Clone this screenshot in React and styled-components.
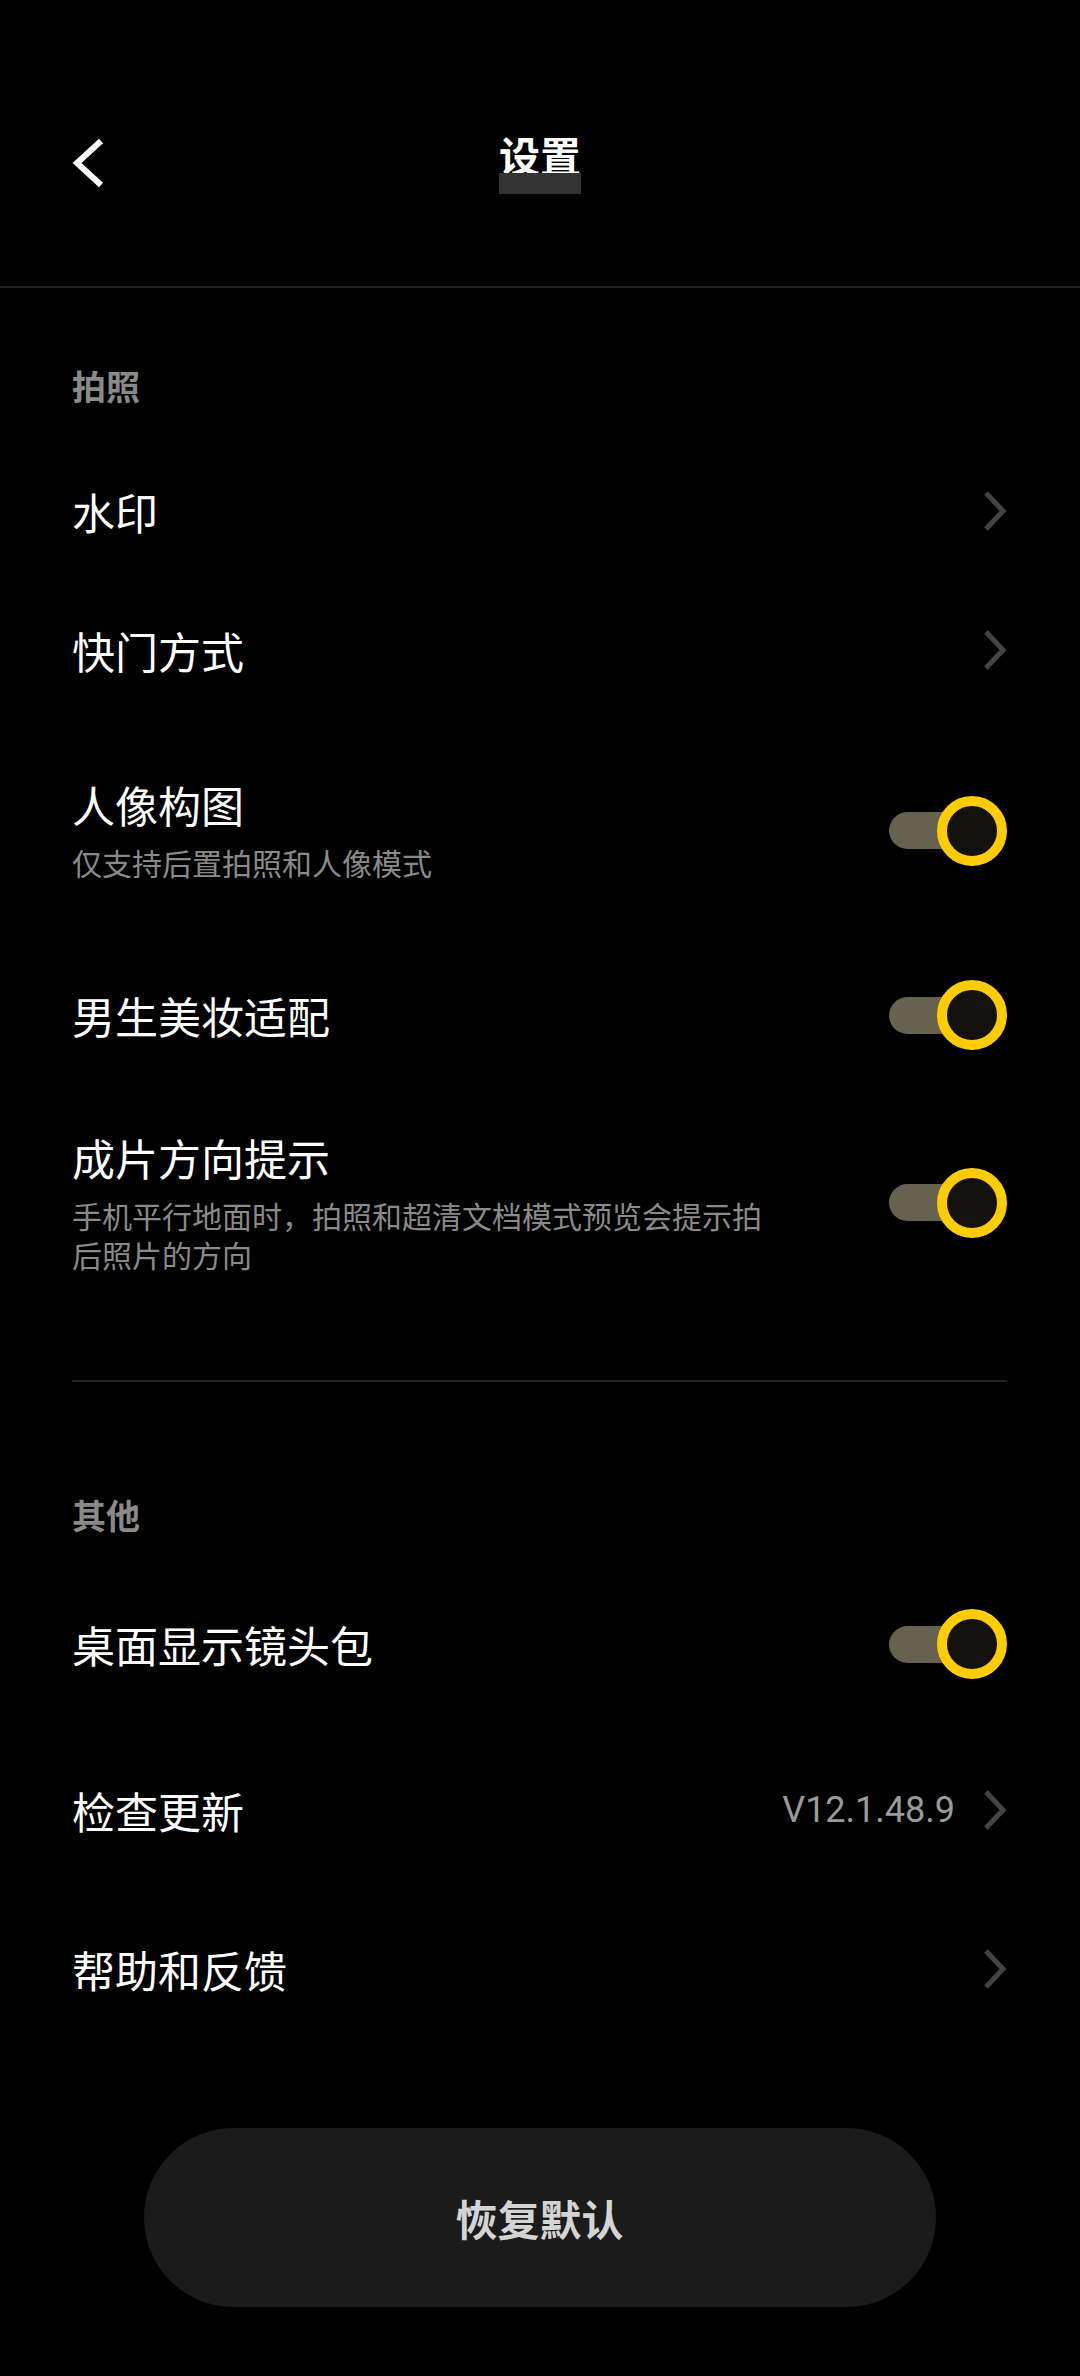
import React from 'react';
import styled, { createGlobalStyle } from 'styled-components';

const Global = createGlobalStyle`
  html, body { margin: 0; padding: 0; background: #000; }
  body { font-family: "Noto Sans CJK SC", "Noto Sans", sans-serif; }
  * { box-sizing: border-box; }
`;

const Page = styled.div`
  width: 1080px;
  min-height: 2376px;
  background: #000;
  color: #fff;
  display: flex;
  flex-direction: column;
`;

const Header = styled.header`
  height: 288px;
  border-bottom: 2px solid #222;
  display: grid;
  grid-template-columns: 1fr auto 1fr;
  align-items: start;
  padding: 0 72px;
`;

const BackButton = styled.button`
  justify-self: start;
  margin: 138px 0 0 -2px;
  padding: 0;
  border: 0;
  background: none;
  width: 34px;
  height: 50px;
  display: flex;
`;

const Title = styled.h1`
  margin: 134px 0 0;
  font-size: 41px;
  line-height: 41px;
  font-weight: 700;
  color: #fff;
  display: flex;
  flex-direction: column;
  &::after {
    content: "";
    display: block;
    height: 21px;
    margin-top: -2px;
    background: #333;
  }
`;

const Content = styled.main`
  display: flex;
  flex-direction: column;
  padding: 0 73px 0 72px;
`;

const SectionLabel = styled.div`
  margin-top: ${p => p.$mt}px;
  margin-bottom: ${p => p.$mb}px;
  font-size: 34px;
  line-height: 34px;
  font-weight: 700;
  color: #8a8a8a;
`;

const Row = styled.div`
  height: ${p => p.$h}px;
  display: flex;
  align-items: center;
  gap: 24px;
`;

const TextCol = styled.div`
  flex: 1;
  min-width: 0;
  display: flex;
  flex-direction: column;
`;

const ItemTitle = styled.div`
  font-size: 43px;
  line-height: 50px;
  color: #fff;
`;

const ItemSub = styled.div`
  margin-top: 14px;
  max-width: 700px;
  font-size: 30px;
  line-height: 39px;
  color: #8a8a8a;
`;

const Value = styled.span`
  font-family: Roboto, "Noto Sans", sans-serif;
  font-size: 36px;
  color: #9a9a9a;
  margin-right: 4px;
`;

const Toggle = styled.span`
  position: relative;
  display: block;
  flex: none;
  width: 118px;
  height: 70px;
`;

const Track = styled.span`
  position: absolute;
  left: 0;
  top: 16.5px;
  width: 110px;
  height: 37px;
  border-radius: 18.5px;
  background: #67624f;
`;

const Knob = styled.span`
  position: absolute;
  right: 0;
  top: 0;
  width: 70px;
  height: 70px;
  border-radius: 50%;
  border: 10px solid #ffcc00;
  background: #13120e;
`;

const Divider = styled.hr`
  margin: ${p => p.$mt}px 0 0;
  border: 0;
  height: 2px;
  background: #222;
`;

const ResetButton = styled.button`
  align-self: center;
  margin-top: 83px;
  width: 792px;
  height: 179px;
  border: 0;
  border-radius: 90px;
  background: #1b1b1b;
  color: #d4d4d4;
  font-family: "Noto Sans CJK SC", sans-serif;
  font-size: 42px;
  font-weight: 700;
`;

const Chevron = () => (
  <svg width="24" height="40" viewBox="0 0 24 40" style={{ flex: 'none' }}>
    <path d="M3 2 L20 20 L3 38" fill="none" stroke="#444" strokeWidth="5" />
  </svg>
);

const Switch = () => (
  <Toggle>
    <Track />
    <Knob />
  </Toggle>
);

export default function App() {
  return (
    <Page>
      <Global />
      <Header>
        <BackButton aria-label="back">
          <svg width="34" height="50" viewBox="0 0 34 50">
            <path d="M31 3 L7 25 L31 47" fill="none" stroke="#fff" strokeWidth="6" />
          </svg>
        </BackButton>
        <Title>设置</Title>
        <span />
      </Header>
      <Content>
        <SectionLabel $mt={81} $mb={38}>拍照</SectionLabel>
        <Row $h={139}>
          <TextCol><ItemTitle>水印</ItemTitle></TextCol>
          <Chevron />
        </Row>
        <Row $h={139}>
          <TextCol><ItemTitle>快门方式</ItemTitle></TextCol>
          <Chevron />
        </Row>
        <Row $h={223}>
          <TextCol>
            <ItemTitle>人像构图</ItemTitle>
            <ItemSub>仅支持后置拍照和人像模式</ItemSub>
          </TextCol>
          <Switch />
        </Row>
        <Row $h={146}>
          <TextCol><ItemTitle>男生美妆适配</ItemTitle></TextCol>
          <Switch />
        </Row>
        <Row $h={229}>
          <TextCol>
            <ItemTitle>成片方向提示</ItemTitle>
            <ItemSub>手机平行地面时，拍照和超清文档模式预览会提示拍后照片的方向</ItemSub>
          </TextCol>
          <Switch />
        </Row>
        <Divider $mt={63} />
        <SectionLabel $mt={116} $mb={29}>其他</SectionLabel>
        <Row $h={166}>
          <TextCol><ItemTitle>桌面显示镜头包</ItemTitle></TextCol>
          <Switch />
        </Row>
        <Row $h={166}>
          <TextCol><ItemTitle>检查更新</ItemTitle></TextCol>
          <Value>V12.1.48.9</Value>
          <Chevron />
        </Row>
        <Row $h={152}>
          <TextCol><ItemTitle>帮助和反馈</ItemTitle></TextCol>
          <Chevron />
        </Row>
        <ResetButton>恢复默认</ResetButton>
      </Content>
    </Page>
  );
}
